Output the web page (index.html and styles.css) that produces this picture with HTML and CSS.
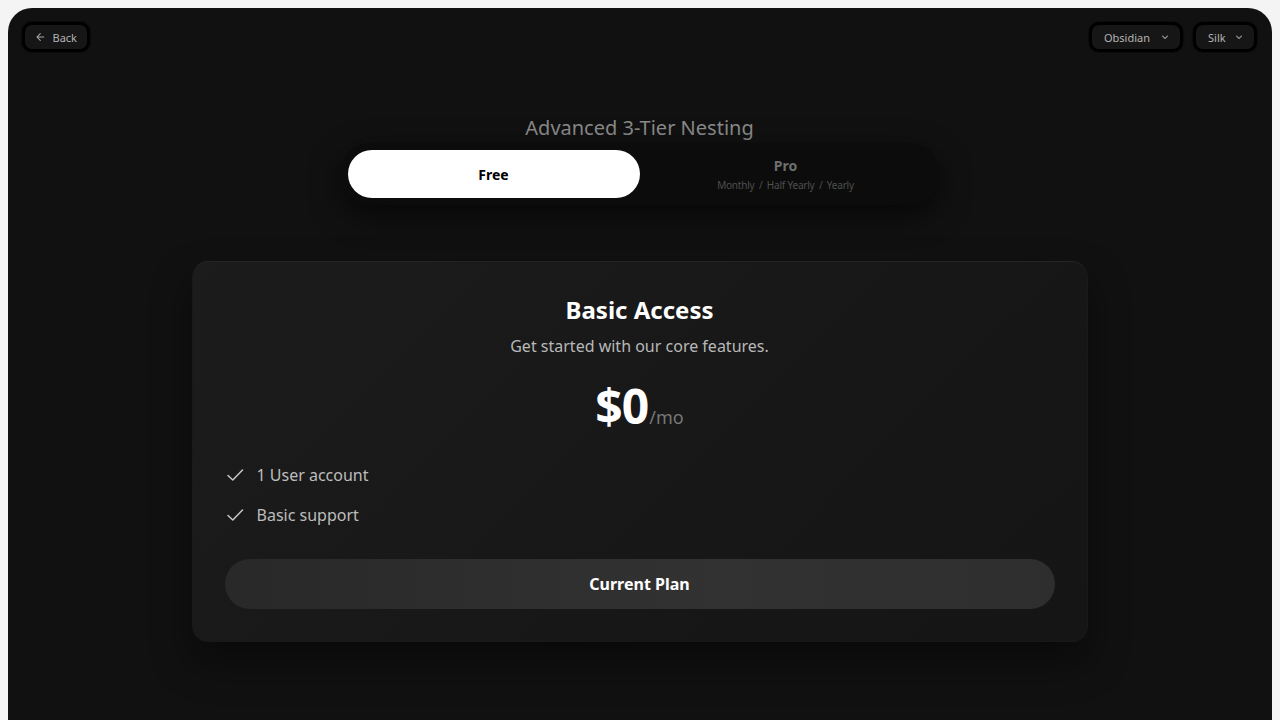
FILE: index.html
```html
<!DOCTYPE html>
<html>
<head>
<meta charset="UTF-8">
<title>Advanced 3-Tier Nesting</title>
	<link rel="stylesheet" href="styles.css">
</head>
<body>
	<div class="app">
		<div class="topbar">
			<button class="chip back">
				<svg width="12" height="12" viewBox="0 0 12 12"><path d="M10 6H2.5M6 2.2L2.2 6 6 9.8" fill="none" stroke="#aaa" stroke-width="1.2" stroke-linecap="round" stroke-linejoin="round"/></svg>
				<span>Back</span>
			</button>
			<div class="pickers">
				<button class="chip select">
					<span>Obsidian</span>
					<svg width="10" height="10" viewBox="0 0 10 10"><path d="M2.5 4l2.5 2.5L7.5 4" fill="none" stroke="#888" stroke-width="1.1" stroke-linecap="round" stroke-linejoin="round"/></svg>
				</button>
				<button class="chip select">
					<span>Silk</span>
					<svg width="10" height="10" viewBox="0 0 10 10"><path d="M2.5 4l2.5 2.5L7.5 4" fill="none" stroke="#888" stroke-width="1.1" stroke-linecap="round" stroke-linejoin="round"/></svg>
				</button>
			</div>
		</div>

		<div class="main">
			<h2 class="title">Advanced 3-Tier Nesting</h2>

			<div class="tiers">
				<div class="tier active">Free</div>
				<div class="tier">
					<div class="tier-name">Pro</div>
					<div class="periods">Monthly <i>/</i> Half Yearly <i>/</i> Yearly</div>
				</div>
			</div>

			<div class="card">
				<h1 class="plan">Basic Access</h1>
				<p class="desc">Get started with our core features.</p>
				<div class="price"><b>$0</b><span>/mo</span></div>
				<ul class="features">
					<li>
						<svg width="20" height="20" viewBox="0 0 20 20"><path d="M3 10.5l4.8 4.5L17.5 5" fill="none" stroke="#c8c8c8" stroke-width="1.5" stroke-linecap="round" stroke-linejoin="round"/></svg>
						1 User account
					</li>
					<li>
						<svg width="20" height="20" viewBox="0 0 20 20"><path d="M3 10.5l4.8 4.5L17.5 5" fill="none" stroke="#c8c8c8" stroke-width="1.5" stroke-linecap="round" stroke-linejoin="round"/></svg>
						Basic support
					</li>
				</ul>
				<button class="cta">Current Plan</button>
			</div>
		</div>
	</div>
</body>
</html>
```

FILE: styles.css
```css
body{
	margin: 8px;
	background-color: #f4f4f4;
	font-family: "Noto Sans", "Open Sans", sans-serif;
}
.app{
	background-color: #111111;
	border-radius: 24px 24px 0 0;
	min-height: 740px;
	padding: 14px 15px 0 14px;
	box-sizing: border-box;
}
.topbar{
	display: flex;
	justify-content: space-between;
	align-items: center;
}
.pickers{
	display: flex;
	gap: 10px;
}
.chip{
	display: flex;
	align-items: center;
	height: 30px;
	box-sizing: border-box;
	background-color: #161616;
	border: 3px solid #000;
	border-radius: 10px;
	box-shadow: 0 0 2px #000;
	color: #b4b4b4;
	font-family: inherit;
	font-size: 11px;
	padding: 0 10px;
	cursor: pointer;
}
.back{
	gap: 7px;
	width: 68px;
	padding-left: 10px;
}
.select{
	gap: 8px;
	padding: 0 10px 0 12px;
	justify-content: space-between;
}
.select:first-child{
	width: 94px;
}
.select:last-child{
	width: 64px;
}
.main{
	display: flex;
	flex-direction: column;
	align-items: center;
}
.title{
	margin: 64px 0 0;
	font-size: 20px;
	font-weight: 400;
	line-height: 24px;
	color: #8a8a8a;
}
.tiers{
	margin-top: 3px;
	display: grid;
	grid-template-columns: 292px 292px;
	padding: 7px 8px;
	background-color: #0c0c0c;
	border-radius: 32px;
	box-shadow: 0 10px 30px rgba(0,0,0,0.6);
}
.tier{
	height: 48px;
	border-radius: 24px;
	display: flex;
	flex-direction: column;
	align-items: center;
	justify-content: center;
}
.tier.active{
	background-color: #fff;
	color: #000;
	font-size: 14px;
	font-weight: 700;
}
.tier-name{
	font-size: 14px;
	font-weight: 700;
	color: #6e6e6e;
	line-height: 18px;
}
.periods{
	font-size: 10px;
	color: #4f4f4f;
	line-height: 14px;
	margin-top: 3px;
	letter-spacing: -0.2px;
}
.periods i{
	font-style: normal;
	margin: 0 2px;
}
.card{
	margin-top: 56px;
	width: 896px;
	box-sizing: border-box;
	padding: 32px;
	background: linear-gradient(135deg, #1c1c1c, #171717 60%, #151515);
	border: 1px solid #191919;
	border-top-color: #242424;
	border-radius: 16px;
	box-shadow: 0 20px 40px rgba(0,0,0,0.45);
	text-align: center;
}
.plan{
	margin: 0;
	font-size: 24px;
	line-height: 32px;
	color: #fff;
	font-weight: 700;
}
.desc{
	margin: 8px 0 0;
	font-size: 16px;
	line-height: 24px;
	color: #b8b8b8;
}
.price{
	margin-top: 24px;
	height: 49px;
	line-height: 48px;
	display: flex;
	justify-content: center;
	align-items: baseline;
}
.price b{
	font-size: 48px;
	font-weight: 700;
	color: #fff;
	letter-spacing: -1px;
}
.price span{
	font-size: 18px;
	color: #777;
	margin-left: 1px;
}
.features{
	list-style: none;
	margin: 32px 0 0;
	padding: 0;
	text-align: left;
}
.features li{
	display: flex;
	align-items: center;
	gap: 12px;
	font-size: 16px;
	line-height: 24px;
	color: #bdbdbd;
	margin-bottom: 16px;
}
.features li:last-child{
	margin-bottom: 0;
}
.cta{
	margin-top: 32px;
	width: 100%;
	height: 50px;
	border: none;
	border-radius: 25px;
	background: linear-gradient(90deg, #292929, #323232 60%, #2e2e2e);
	color: #fff;
	font-family: inherit;
	font-size: 16px;
	font-weight: 700;
	cursor: pointer;
}
```
